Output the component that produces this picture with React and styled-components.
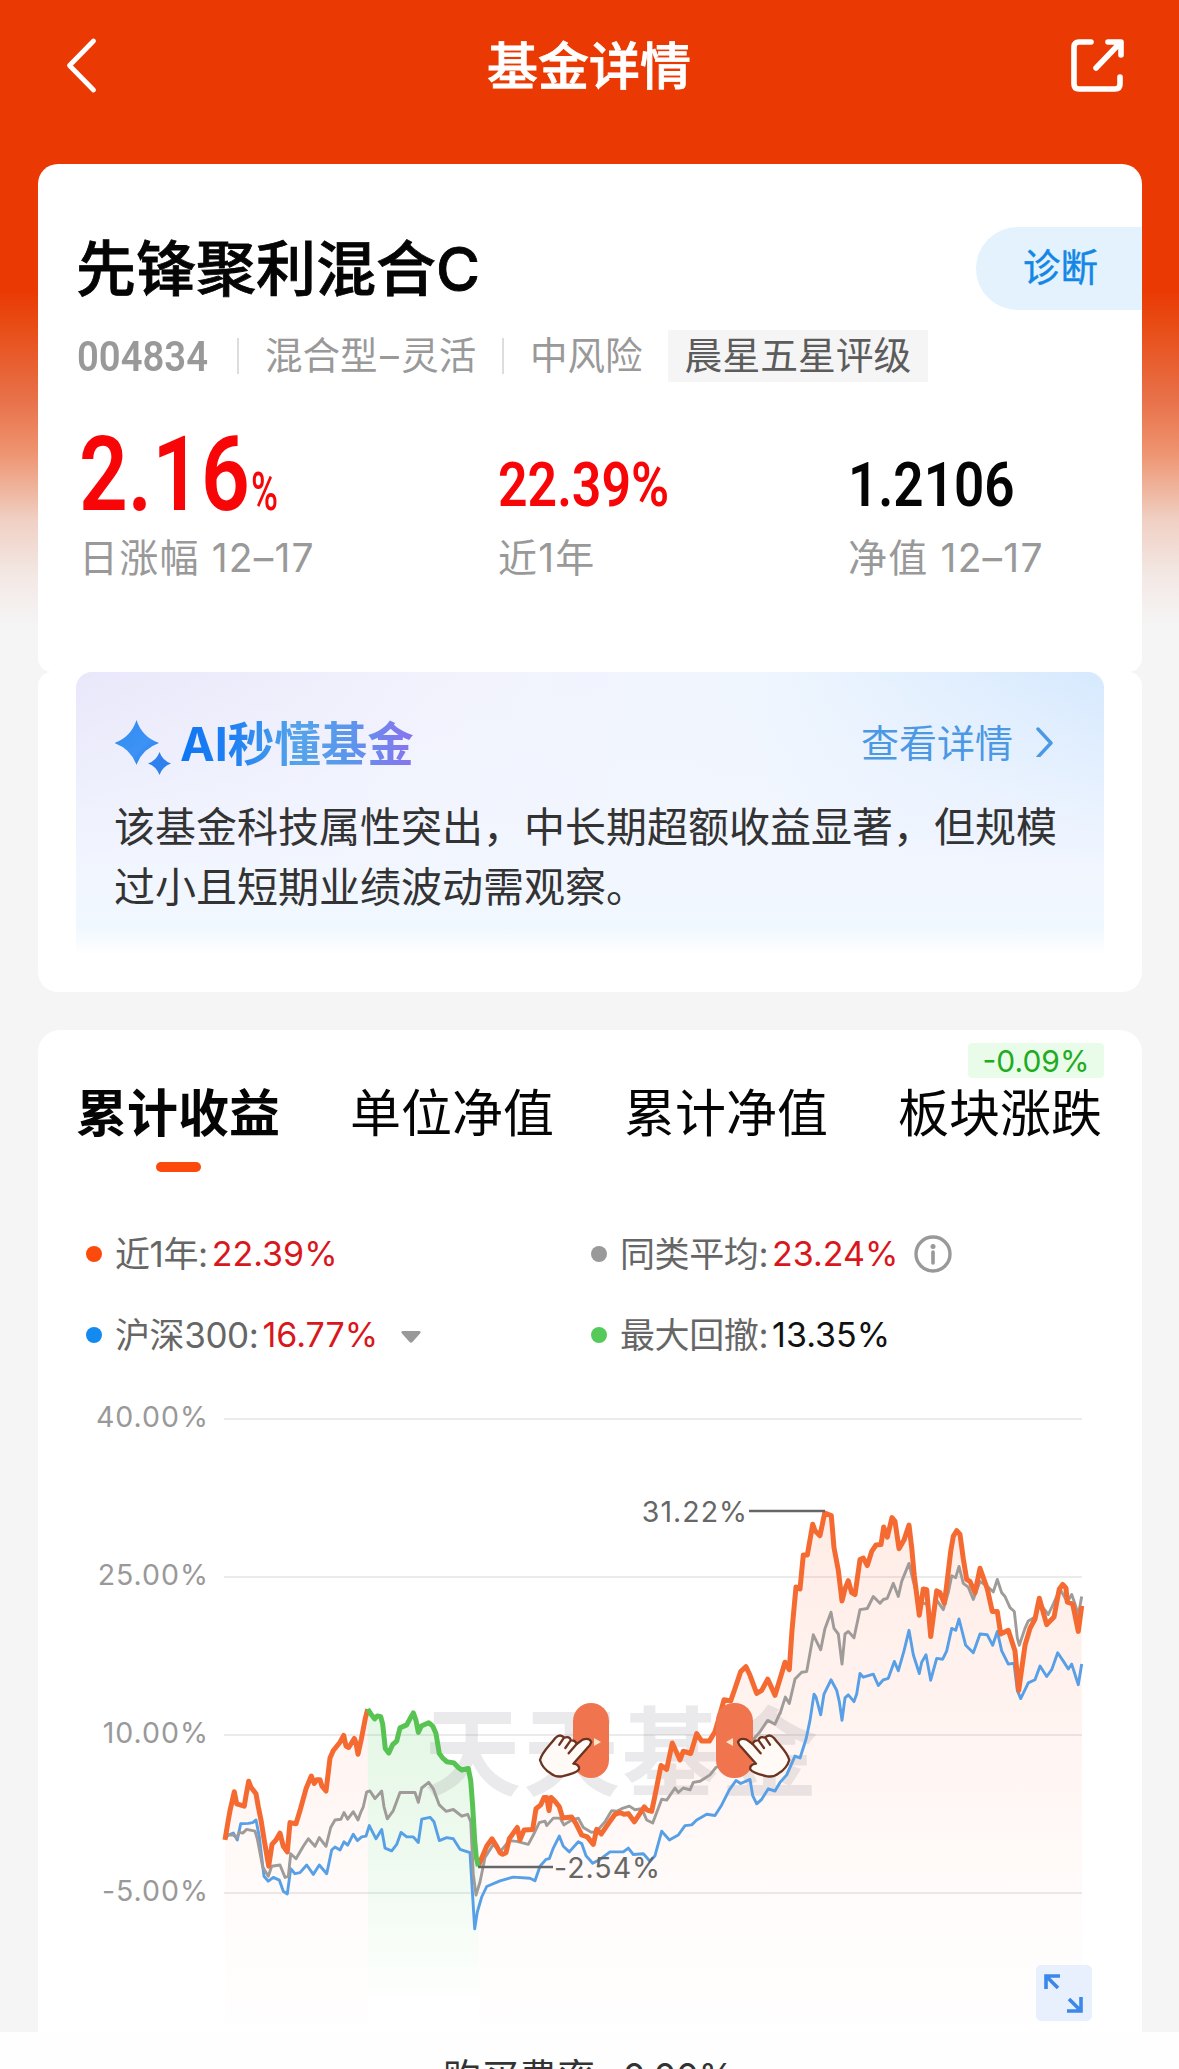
import React from 'react'
import styled, { createGlobalStyle } from 'styled-components';


const legends = [
  { label: '近1年:', value: '22.39%', dot: '#fb4a0b', color: '#d9161c' },
  { label: '同类平均:', value: '23.24%', dot: '#999999', color: '#d9161c', info: true },
  { label: '沪深300:', value: '16.77%', dot: '#128af0', color: '#d9161c', arrow: true },
  { label: '最大回撤:', value: '13.35%', dot: '#55c95a', color: '#111111' },
];

const tabs = ['累计收益', '单位净值', '累计净值', '板块涨跌'];

const axis = [
  { text: '40.00%', y: 1419 },
  { text: '25.00%', y: 1577 },
  { text: '10.00%', y: 1735 },
  { text: '-5.00%', y: 1893 },
];

// 走势数据 [x偏移, 点]
const fundStart = [
  [0, '75,958 84,910 90,880 103,830 110,862 133,868 138,840 146,802 153,818 168,835 175,870 183,905 192,955 206,1028 216,970 228,958 240,940 250,975 262,990 270,912 288,915 300,880 318,822 334,788 343,808 350,798 360,798 366,815 378,828 384,785 390,740 400,720 420,698 431,680 438,708 446,712 463,688 468,700 474,730 484,690 496,635 503,610'],
];

const fundDown = [
  [0, '503,610 512,622 524,636 532,628 542,630 548,650 556,715 566,727 578,704 590,695 600,660 620,652 632,632 640,620 648,640 655,672 664,655 686,646 698,655 708,675 718,728 728,740 740,750 762,753 775,765 785,772 805,768 812,800 818,870 824,960 829,1005 835,1028'],
];

const fundEnd = [
  [0, '835,1028 848,1000 860,975 876,955 890,975 900,992'],
  [900, '8,996 18,992 28,955 40,940 52,925 60,958 72,932 98,930 108,875 122,865 132,845 140,845 147,880 153,845 165,855 178,870 188,900 215,897 228,915 245,945 262,950 280,970 290,930 304,942 325,915 345,890 360,885 372,890 385,888 403,910 418,890 433,870 440,878 455,882 465,840 483,760 500,770 517,700 528,722 540,745 550,722 572,728 590,675 605,695 628,695 645,670 655,640 672,585 692,588 705,555 722,510 738,497 750,520 770,568 785,560 803,530 825,573 840,530 855,485'],
  [1740, '15,487 28,505 36,400 48,285 60,290 70,200 82,200 98,118 105,135 120,148 134,88 154,95 162,180 175,240 186,322 195,290 205,268 215,300 225,305 240,212 250,208 262,228 275,190 288,173 303,172 311,125 322,152 336,100 345,110 357,183 372,160 387,120 395,180 403,255 418,360 430,290 440,292 452,417 470,295 480,300 493,328 500,280 512,190 520,150 530,135 540,145 550,210 560,265 570,270 585,300 600,235 612,265 622,290 637,350 652,350 662,410 685,400 705,455 716,560 735,440 750,395 765,370 778,315 800,385 822,365 838,290 848,278 858,288 862,325 878,330 895,403 905,335'],
];

const average = [
  [0, '75,955 80,945 100,945 110,952 118,938 128,940 140,930 165,935 172,955 188,1030 205,1055 215,1028 240,1025 255,1058 265,1055 272,995 288,1008 310,975 325,955 345,975 358,952 378,975 392,925 405,905 423,903 432,885 443,903 460,883 474,905 482,885 490,870 500,830 510,828 525,848 545,828 552,870 562,902 580,880 600,832 645,832 655,858 665,820 686,805 700,822 718,865 738,882 760,877 785,895 803,890 812,910 820,1050 828,1105 840,1070 855,1005 880,970 900,990'],
  [900, '28,960 50,962 85,970 100,945 118,912 135,908 140,920 160,900 180,900 192,918 215,905 235,900 250,925 275,938 290,935 315,910 335,880 350,882 365,875 388,868 405,878 425,875 440,905 458,913 470,885 485,850 500,852 525,820 535,832 550,820 570,825 580,805 600,802 630,785 648,765 700,740 750,700 780,670 803,640 825,650 840,620'],
  [1740, '0,622 16,578 28,595 45,530 65,512 80,510 100,412 122,452 135,395 153,352 162,395 175,410 186,490 195,410 205,403 222,420 240,345 262,342 280,310 300,328 310,318 322,315 340,275 355,310 365,270 387,222 400,270 418,325 440,330 452,380 470,320 490,345 505,300 515,255 527,260 537,230 550,275 565,285 580,318 600,270 618,280 640,298 652,265 665,300 675,310 690,340 703,350 712,420 718,440 735,395 745,375 765,365 780,330 805,358 820,330 840,290 862,325 875,305 885,330 895,360 905,310'],
];

const hs300 = [
  [0, '75,955 85,945 100,940 112,958 122,915 145,914 158,912 168,905 178,950 192,1055 205,1068 220,1058 238,1065 250,1095 262,1102 272,1035 285,1048 300,1045 320,1025 340,1050 358,1025 380,1048 395,985 405,977 420,985 432,963 443,972 460,943 472,960 485,950 498,948 508,920 528,955 545,930 555,980 575,987 590,970 603,938 620,950 640,950 655,965 665,903 690,898 702,910 718,960 740,952 760,955 780,983 810,992 816,1080 824,1195 832,1150 845,1110 860,1082 900,1067'],
  [900, '40,1057 90,1060 105,1067 120,1028 138,1010 148,1008 160,980 178,948 190,975 208,990 235,963 245,968 258,1000 278,1020 300,1010 330,990 370,990 385,980 400,997 430,995 450,1015 465,1000 485,935 508,958 535,945 555,920 575,918 590,905 620,890 645,893 665,865 688,825 708,800 722,808 750,797 758,840 770,862 785,850 805,822 825,828'],
  [1740, '0,805 20,785 45,735 60,740 78,690 90,640 102,570 108,578 122,625 132,570 153,532 170,560 178,590 186,640 195,580 205,572 222,590 230,570 240,515 250,525 280,517 295,547 310,532 325,528 343,483 355,508 372,455 387,400 400,465 418,515 425,485 438,465 452,533 470,475 488,477 500,455 515,395 527,400 537,370 557,440 580,460 600,410 622,412 638,440 652,403 665,455 685,490 702,488 712,560 722,582 745,540 765,532 780,495 800,523 815,505 833,460 850,482 865,503 875,490 895,545 905,490'],
];

const toPoints = (chunks) =>
  chunks.map(([dx, text]) =>
    text.split(' ').map((pair) => {
      const [x, y] = pair.split(',').map(Number);
      return `${(200 + (x + dx) / 3).toFixed(1)},${(1480 + y / 2.662).toFixed(1)}`;
    }).join(' ')
  ).join(' ');


const Hand = () => (
  <g strokeLinecap="round" strokeLinejoin="round" stroke="#6b3320" strokeWidth="7">
    <path fill="#fffaf5" d="M30 210C36 186 58 168 76 144Q90 130 103 143Q118 137 123 151Q136 150 140 162L158 149Q178 142 184 156Q181 166 172 174L130 221Q150 224 147 238Q140 249 96 259Q76 262 62 250Q38 236 30 210Z" />
    <path fill="none" d="M100 146L88 164M120 154L106 174M140 162L116 190" />
  </g>
);

const Chart = () => (
  <StChart viewBox="38 1400 1104 632">
    <defs>
      <linearGradient id="orangeFill" gradientUnits="userSpaceOnUse" x1="0" y1="1510" x2="0" y2="2025">
        <stop offset="0" stopColor="#ff6a3d" stopOpacity="0.13" />
        <stop offset="0.5" stopColor="#ff6a3d" stopOpacity="0.065" />
        <stop offset="0.75" stopColor="#ff6a3d" stopOpacity="0.025" />
        <stop offset="1" stopColor="#ff6a3d" stopOpacity="0.005" />
      </linearGradient>
      <linearGradient id="greenFill" gradientUnits="userSpaceOnUse" x1="0" y1="1710" x2="0" y2="2010">
        <stop offset="0" stopColor="#4ac850" stopOpacity="0.15" />
        <stop offset="0.5" stopColor="#4ac850" stopOpacity="0.09" />
        <stop offset="1" stopColor="#4ac850" stopOpacity="0" />
      </linearGradient>
    </defs>

    {axis.map((item) => (
      <g key={item.text}>
        <line x1="224" x2="1082" y1={item.y} y2={item.y} stroke="#ebebeb" strokeWidth="2" />
        <StSvgText x="209" y={item.y + 8} textAnchor="end" fill="#999999">{item.text}</StSvgText>
      </g>
    ))}

    <polygon fill="url(#orangeFill)" points={`225,2032 ${toPoints(fundStart)} 368,2032`} />
    <polygon fill="url(#greenFill)" points={`368,2010 ${toPoints(fundDown)} 479,2010`} />
    <polygon fill="url(#orangeFill)" points={`479,2032 ${toPoints(fundEnd)} 1082,2032`} />

    <StWatermark x="424" y="1788" textLength="394">天天基金</StWatermark>

    <g fill="none" strokeLinejoin="round">
      <polyline points={toPoints(hs300)} stroke="#579fe6" strokeWidth="2.9" />
      <polyline points={toPoints(average)} stroke="#9f9b99" strokeWidth="2.9" />
      <polyline points={toPoints(fundStart)} stroke="#f46a31" strokeWidth="5" />
      <polyline points={toPoints(fundEnd)} stroke="#f46a31" strokeWidth="5" />
      <polyline points={toPoints(fundDown)} stroke="#57c353" strokeWidth="5" />
    </g>

    <g stroke="#666666" strokeWidth="2.6">
      <line x1="749" x2="825" y1="1511" y2="1511" />
      <line x1="478" x2="553" y1="1867" y2="1867" />
    </g>
    <StSvgText x="748" y="1522" textAnchor="end" fill="#666666">31.22%</StSvgText>
    <StSvgText x="554" y="1878" fill="#666666">-2.54%</StSvgText>

    <rect x="573" y="1703" width="36" height="75" rx="18" fill="#f0754f" />
    <rect x="716" y="1703" width="37" height="75" rx="18" fill="#f0754f" />
    <path d="M594 1738l7 4-7 4z" fill="#fde3c8" />
    <path d="M733 1738l-7 4 7 4z" fill="#fde3c8" />
    <g transform="translate(530 1690) scale(0.3333)"><Hand /></g>
    <g transform="translate(799.3 1690) scale(-0.3333 0.3333)"><Hand /></g>

    <rect x="1036" y="1965" width="56" height="56" rx="5" fill="#e9f0fd" />
    <g fill="none" stroke="#3b87ea" strokeWidth="3.6">
      <path d="M1060 1976H1046V1989M1046 1976L1058 1988" />
      <path d="M1067 2011H1081V1997M1081 2011L1069 1999" />
    </g>
  </StChart>
);


const App = () => {
  return (
    <StPage>
      <GlobalStyle />
      <StHeader>
        <svg width="60" height="60" viewBox="0 0 60 60" fill="none" stroke="#fff" strokeWidth="4.8" strokeLinecap="round" strokeLinejoin="round">
          <path d="M29.5 7L5.500 31.500L29.500 56" />
        </svg>
        <StHeaderTitle>基金详情</StHeaderTitle>
        <svg width="60" height="60" viewBox="0 0 60 60" fill="none" stroke="#fff" strokeWidth="5.6" strokeLinecap="round" strokeLinejoin="round">
          <path d="M22 8H10Q5 8 5 13V50Q5 55 10 55H46Q51 55 51 50V43M27 34L51 9M39 8H52V21" />
        </svg>
      </StHeader>

      <StFundCard>
        <StNameRow>
          <StName>先锋聚利混合C</StName>
          <StDiagnose>诊断</StDiagnose>
        </StNameRow>
        <StInfoRow>
          <StCode><StNarrow $size={42} $scale={0.91} $weight={600}>004834</StNarrow></StCode>
          <StType>混合型<StDash>–</StDash>灵活</StType>
          <StRisk>中风险</StRisk>
          <StRating>晨星五星评级</StRating>
        </StInfoRow>
        <StStats>
          <StStat $width={419}>
            <StNumber $color="#f80508">
              <StNarrow $size={103} $scale={0.83} $weight={600}>2.16</StNarrow>
              <StUnit><StNarrow $size={54} $scale={0.68} $weight={500}>%</StNarrow></StUnit>
            </StNumber>
            <StStatLabel>日涨幅 12–17</StStatLabel>
          </StStat>
          <StStat $width={350}>
            <StNumber $color="#f80508" $top={10}><StNarrow $size={62} $scale={0.835} $weight={600}>22.39%</StNarrow></StNumber>
            <StStatLabel>近1年</StStatLabel>
          </StStat>
          <StStat $width={220}>
            <StNumber $color="#050505" $top={10}><StNarrow $size={62} $scale={0.855} $weight={600}>1.2106</StNarrow></StNumber>
            <StStatLabel>净值 12–17</StStatLabel>
          </StStat>
        </StStats>
      </StFundCard>

      <StAiCard>
        <StAiBox>
          <StAiHead>
            <svg width="65" height="60" viewBox="0 0 65 60">
              <defs>
                <linearGradient id="star" x1="0" y1="0" x2="1" y2="1">
                  <stop offset="0" stopColor="#2f8cf5" />
                  <stop offset="0.6" stopColor="#3d92f5" />
                  <stop offset="1" stopColor="#2478ec" />
                </linearGradient>
              </defs>
              <path fill="url(#star)" d="M21.500 2Q27 19 44 25Q27 31 21.500 47Q16 31 -0.500 25Q16 19 21.500 2Z" />
              <path fill="#2f80ee" d="M44.500 34Q47.500 42.500 56 45.500Q47.500 48.500 44.500 57Q41.500 48.500 33 45.500Q41.500 42.500 44.500 34Z" />
            </svg>
            <StAiTitle>AI秒懂基金</StAiTitle>
            <StMore>
              查看详情
              <svg width="20" height="32" viewBox="0 0 20 32" fill="none" stroke="#4b98e4" strokeWidth="3.4" strokeLinecap="round" strokeLinejoin="round">
                <path d="M4 4L17 18L4 32" />
              </svg>
            </StMore>
          </StAiHead>
          <StAiText>该基金科技属性突出，中长期超额收益显著，但规模过小且短期业绩波动需观察。</StAiText>
        </StAiBox>
      </StAiCard>

      <StChartCard>
        <StTabs>
          {tabs.map((name, i) => (
            <StTab key={name} $active={i === 0}>
              {name}
              {i === 3 && <StBadge>-0.09%</StBadge>}
            </StTab>
          ))}
        </StTabs>
        <StLegends>
          {legends.map((item) => (
            <StLegend key={item.label}>
              <StDot $color={item.dot} />
              <StLegendLabel>{item.label}</StLegendLabel>
              <StLegendValue $color={item.color}>{item.value}</StLegendValue>
              {item.info && (
                <StInfoIcon width="40" height="40" viewBox="0 0 40 40">
                  <circle cx="20" cy="20" r="17" fill="none" stroke="#999" strokeWidth="3.4" />
                  <circle cx="20" cy="12.500" r="2.500" fill="#999" />
                  <path d="M20 18V29" stroke="#999" strokeWidth="3.600" strokeLinecap="round" />
                </StInfoIcon>
              )}
              {item.arrow && (
                <StArrowIcon width="20" height="12" viewBox="0 0 20 12">
                  <path d="M1.500 0H18.500Q20.500 0.500 19 2.500L11.500 11Q10 12.500 8.500 11L1 2.500Q-0.500 0.500 1.500 0Z" fill="#999999" />
                </StArrowIcon>
              )}
            </StLegend>
          ))}
        </StLegends>
        <Chart />
      </StChartCard>

      <StFeeBar>
        <StFee>购买费率</StFee>
        <StFee $size={35.5}>0.00%</StFee>
      </StFeeBar>
    </StPage>
  )
}

const GlobalStyle = createGlobalStyle`
  * {
    box-sizing: border-box;
  }
  body {
    margin: 0;
    overflow: hidden;
  }
`;

const StPage = styled.div`
  display: flex;
  flex-direction: column;
  width: 1179px;
  height: 2069px;
  overflow: hidden;
  font-family: Inter, "Noto Sans CJK SC", sans-serif;
  background: linear-gradient(
    180deg,
    #ea3903 0,
    #ea3903 290px,
    #e84c15 325px,
    #e8734c 403px,
    #ee9470 453px,
    #f0d0c4 520px,
    #f3e8e4 575px,
    #f5f5f5 625px
  );
`;

const StHeader = styled.div`
  display: flex;
  justify-content: space-between;
  flex: none;
  height: 164px;
  padding: 34px 50px 0 64px;
`;

const StHeaderTitle = styled.div`
  height: 60px;
  line-height: 66px;
  padding-right: 15px;
  font-size: 51px;
  font-weight: 500;
  color: white;
  -webkit-text-stroke: 0.8px white;
`;

const StFundCard = styled.div`
  flex: none;
  width: 1104px;
  height: 508px;
  margin: 0 0 0 38px;
  padding: 63px 0 0 38px;
  border-radius: 20px 20px 14px 14px;
  background-color: white;
`;

const StNameRow = styled.div`
  display: flex;
  justify-content: space-between;
  height: 83px;
`;

const StName = styled.div`
  line-height: 85px;
  font-size: 60px;
  font-weight: 500;
  color: #050505;
  -webkit-text-stroke: 0.8px #050505;
`;

const StDiagnose = styled.div`
  width: 166px;
  padding-left: 47px;
  line-height: 81px;
  font-size: 37.5px;
  color: #1487e6;
  background-color: #e4f2fd;
  border-radius: 42px 0 0 42px;
  -webkit-text-stroke: 0.4px #1487e6;
`;

const StInfoRow = styled.div`
  display: flex;
  align-items: center;
  height: 52px;
  margin-top: 20px;
  font-size: 37.5px;
  color: #999999;
`;

const StCode = styled.div`
  width: 163px;
  height: 36px;
  line-height: 38px;
  padding-left: 1px;
  border-right: 2px solid #dddddd;
`;

const StType = styled.div`
  width: 265px;
  height: 36px;
  line-height: 36px;
  padding-left: 26px;
  white-space: nowrap;
  border-right: 2px solid #dddddd;
`;

const StDash = styled.span`
  margin: 0 2.5px;
`;

const StRisk = styled.div`
  width: 164px;
  height: 36px;
  line-height: 36px;
  padding-left: 26px;
`;

const StRating = styled.div`
  width: 260px;
  height: 52px;
  line-height: 51px;
  text-align: center;
  font-size: 37.8px;
  color: #5c5c5c;
  background-color: #f5f5f5;
`;

const StNarrow = styled.span`
  display: inline-block;
  transform: scaleX(${(props) => props.$scale});
  transform-origin: left center;
  font-family: Roboto, "Liberation Sans", sans-serif;
  font-size: ${(props) => props.$size}px;
  font-weight: ${(props) => props.$weight};
`;

const StStats = styled.div`
  display: flex;
  margin-top: 38px;
`;

const StStat = styled.div`
  width: ${(props) => props.$width}px;
  padding-left: 3px;
`;

const StNumber = styled.div`
  display: flex;
  align-items: baseline;
  height: 110px;
  padding-top: ${(props) => props.$top || 0}px;
  line-height: 110px;
  color: ${(props) => props.$color};
`;

const StUnit = styled.div`
  margin-left: -34px;
`;

const StStatLabel = styled.div`
  height: 50px;
  margin-top: 2px;
  line-height: 51px;
  font-size: 39px;
  letter-spacing: 1.2px;
  color: #999999;
  white-space: nowrap;
`;

const StAiCard = styled.div`
  flex: none;
  width: 1104px;
  height: 320px;
  margin-left: 38px;
  padding: 0 38px;
  border-radius: 14px 14px 20px 20px;
  background-color: white;
`;

const StAiBox = styled.div`
  height: 286px;
  padding: 46px 0 0 39px;
  border-radius: 16px 16px 0 0;
  background:
    linear-gradient(180deg, rgba(242, 246, 255, 0) 0, rgba(242, 246, 255, 1) 205px, rgba(240, 248, 255, 1) 255px, #ffffff 284px),
    linear-gradient(90deg, #e9e7fa 0, #f2f2fd 35%, #f0f6fe 65%, #d6e9fe 100%);
`;

const StAiHead = styled.div`
  display: flex;
  height: 60px;
`;

const StAiTitle = styled.div`
  flex: none;
  height: 60px;
  margin-right: auto;
  line-height: 52px;
  font-size: 46.500px;
  font-weight: 700;
  color: transparent;
  background: linear-gradient(90deg, #0f76f2 0, #1f80f3 22%, #55a4ea 50%, #5b96ec 72%, #8a73ee 100%);
  background-clip: text;
`;

const StMore = styled.div`
  display: flex;
  align-items: center;
  gap: 21px;
  height: 45px;
  padding-right: 50px;
  font-size: 38px;
  color: #4b98e4;
`;

const StAiText = styled.div`
  width: 950px;
  margin: 19px 0 0 -1px;
  line-height: 60px;
  font-size: 41px;
  color: #333333;
`;

const StChartCard = styled.div`
  flex: none;
  width: 1104px;
  height: 1002px;
  margin: 38px 0 0 38px;
  border-radius: 22px 22px 0 0;
  background-color: white;
`;

const StTabs = styled.div`
  display: flex;
  justify-content: space-between;
  height: 142px;
  padding: 52px 40px 0 38px;
`;

const StTab = styled.div`
  position: relative;
  line-height: 64px;
  font-size: 51px;
  font-weight: ${(props) => (props.$active ? 700 : 400)};
  color: #050505;
  &::after {
    content: '';
    display: ${(props) => (props.$active ? 'block' : 'none')};
    width: 45px;
    height: 10px;
    margin: 16px auto 0;
    border-radius: 5px;
    background-color: #fb4a0b;
  }
`;

const StBadge = styled.div`
  position: absolute;
  top: -39px;
  right: -2px;
  width: 136px;
  height: 35px;
  line-height: 37px;
  text-align: center;
  font-size: 30px;
  font-weight: 400;
  color: #1fab22;
  background-color: #e9fce9;
  border-radius: 4px;
`;

const StLegends = styled.div`
  display: grid;
  grid-template-columns: 505px 1fr;
  grid-auto-rows: 81px;
  height: 228px;
  padding: 41px 0 0 48px;
`;

const StLegend = styled.div`
  display: flex;
  align-items: center;
`;

const StDot = styled.div`
  width: 16px;
  height: 16px;
  border-radius: 50%;
  background-color: ${(props) => props.$color};
`;

const StLegendLabel = styled.div`
  margin: 0 0 4px 13px;
  font-size: 35px;
  letter-spacing: -0.4px;
  color: #666666;
`;

const StLegendValue = styled.div`
  margin-left: 4px;
  font-size: 34px;
  color: ${(props) => props.$color};
`;

const StInfoIcon = styled.svg`
  margin-left: 15px;
`;

const StArrowIcon = styled.svg`
  margin: 4px 0 0 23px;
`;

const StChart = styled.svg`
  display: block;
  width: 1104px;
  height: 632px;
`;

const StSvgText = styled.text`
  font-family: Inter, sans-serif;
  font-size: 28.500px;
  letter-spacing: 1px;
`;

const StWatermark = styled.text`
  font-family: "Noto Sans CJK SC", sans-serif;
  font-size: 97px;
  font-weight: 700;
  fill: #8a8690;
  fill-opacity: 0.18;
`;

const StFeeBar = styled.div`
  display: flex;
  flex: none;
  gap: 28px;
  height: 37px;
  padding: 18px 0 0 443px;
  overflow: hidden;
  background-color: #fefefe;
`;

const StFee = styled.div`
  flex: none;
  height: 54px;
  line-height: 54px;
  font-size: ${(props) => props.$size || 38}px;
  color: #333333;
`;


export default App
